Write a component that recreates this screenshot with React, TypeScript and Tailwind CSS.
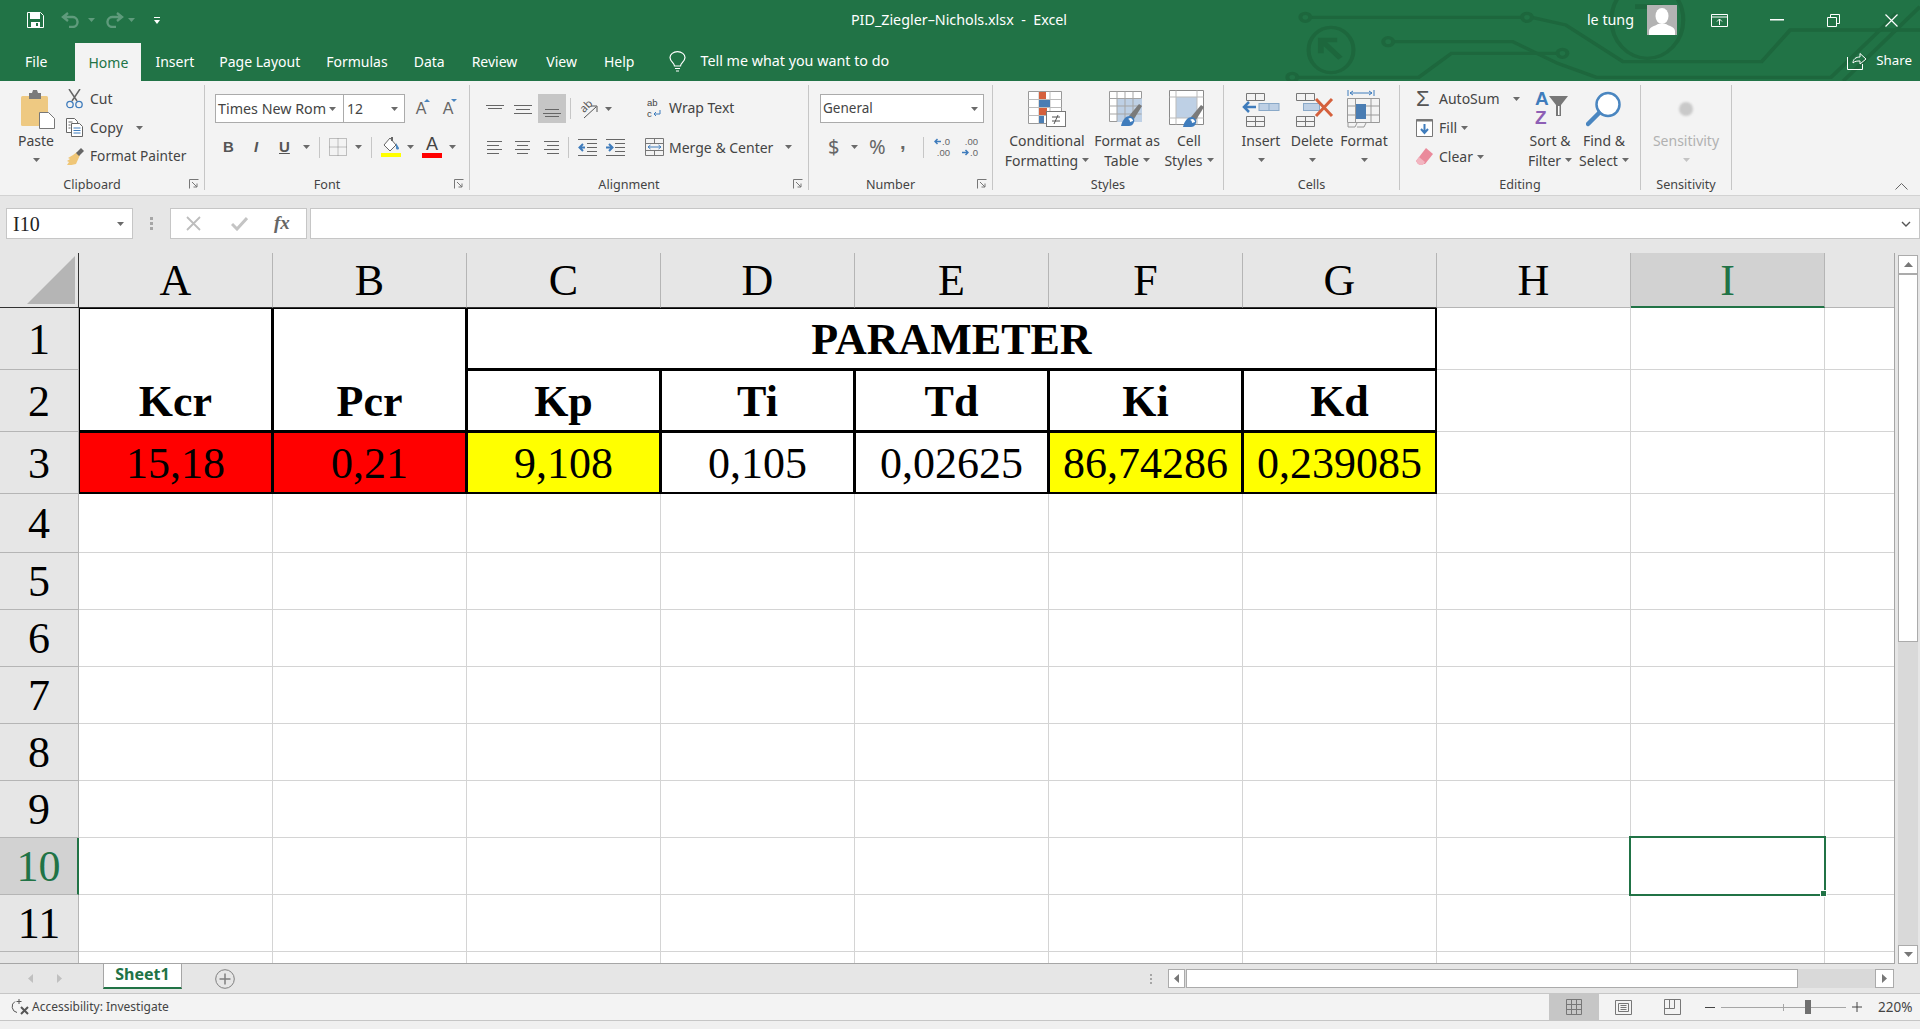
import type { ReactNode } from 'react'

const UI = "font-['Noto_Sans',sans-serif]"
const SERIF = "font-['Liberation_Serif',serif]"
const SANS = "font-['Liberation_Sans',sans-serif]"

function Caret({ className = '', color = '#6a6a6a' }: { className?: string; color?: string }) {
  return (
    <svg width="7" height="4" viewBox="0 0 7 4" className={`shrink-0 ${className}`}>
      <path d="M0 0h7L3.5 4z" fill={color} />
    </svg>
  )
}

function Circuit() {
  return (
    <svg
      viewBox="0 0 1568 243"
      preserveAspectRatio="none"
      className="absolute right-0 top-0 h-[81px] w-[640px]"
      fill="none"
      stroke="#1d673d"
      strokeWidth="10"
    >
      <path d="M74 52H593M617 52 700 75 840 185H1180L1250 90H1568" />
      <path d="M277 125H570L680 190 775 232H1350L1470 90 1510 40" />
      <path d="M42 232H340L420 160H680" />
      <path d="M1380 243 1568 20" />
      <ellipse cx="62" cy="52" rx="12" ry="12" />
      <ellipse cx="605" cy="52" rx="12" ry="12" />
      <ellipse cx="265" cy="125" rx="12" ry="12" />
      <ellipse cx="692" cy="160" rx="12" ry="12" />
      <ellipse cx="30" cy="232" rx="12" ry="12" />
      <ellipse cx="125" cy="150" rx="55" ry="68" />
      <path d="M148 175 105 125M100 160V120H140" strokeWidth="14" />
      <ellipse cx="900" cy="60" rx="88" ry="115" />
      <path d="M870 20H930V75" strokeWidth="14" />
    </svg>
  )
}

function TitleBar() {
  return (
    <div className="relative h-[43px] text-white">
      <div className="absolute left-0 top-0 flex h-[40px] items-center pl-[27px]">
        <svg width="17" height="16" viewBox="0 0 17 16">
          <path d="M.5.5h13l3 3v12H.5z" fill="none" stroke="#fff" />
          <rect x="3" y="1" width="10" height="6" fill="#fff" />
          <rect x="4" y="10" width="9" height="6" fill="#fff" />
          <rect x="9" y="11" width="2" height="3" fill="#217346" />
        </svg>
        <svg width="18" height="16" viewBox="0 0 18 16" className="ml-[17px]" fill="none" stroke="#5f9b7c" strokeWidth="2.4">
          <path d="M7 1 2 5l5 4M2 5h9a5 5 0 0 1 1 10H8" />
        </svg>
        <Caret className="ml-[9px]" color="#5f9b7c" />
        <svg width="18" height="16" viewBox="0 0 18 16" className="ml-[11px]" fill="none" stroke="#5f9b7c" strokeWidth="2.4">
          <path d="m11 1 5 4-5 4M16 5H7a5 5 0 0 0-1 10h4" />
        </svg>
        <Caret className="ml-[4px]" color="#5f9b7c" />
        <svg width="6" height="8" viewBox="0 0 6 8" className="ml-[19px] mt-[2px]">
          <path d="M0 0h6v1H0zM0 3h6L3 7z" fill="#fff" />
        </svg>
      </div>
      <div className={`${UI} absolute inset-x-0 top-0 flex h-[40px] items-center justify-center pr-[2px] text-[14.3px]`}>
        PID_Ziegler–Nichols.xlsx&nbsp; -&nbsp; Excel
      </div>
      <div className="absolute right-0 top-0 flex h-[40px] items-center">
        <span className={`${UI} mb-px text-[14.3px]`}>le tung</span>
        <div className="ml-[13px] flex h-[30px] w-[30px] items-end justify-center overflow-hidden bg-[#b3b3b3]">
          <svg width="26" height="27" viewBox="0 0 26 27" fill="#fff">
            <ellipse cx="13" cy="8" rx="6.5" ry="8" />
            <path d="M0 27v-4c0-4 6-5 9-7h8c3 2 9 3 9 7v4z" />
          </svg>
        </div>
        <svg width="17" height="13" viewBox="0 0 17 13" className="ml-[34px]" fill="none" stroke="#fff">
          <path d="M.5.500h16v12H.5zM.5 3h16M8.500 11V5M6 7.500l2.500-2.500L11 7.500" />
        </svg>
        <svg width="14" height="2" viewBox="0 0 14 2" className="ml-[42px]">
          <rect width="14" height="1.500" fill="#fff" />
        </svg>
        <svg width="13" height="13" viewBox="0 0 13 13" className="ml-[43px]" fill="none" stroke="#fff">
          <path d="M.5 3.500h9v9h-9zM3.500 3.500v-3h9v9h-3" />
        </svg>
        <svg width="13" height="13" viewBox="0 0 13 13" className="ml-[45px] mr-[22px]" fill="none" stroke="#fff" strokeWidth="1.200">
          <path d="m.5.500 12 12M12.500.5l-12 12" />
        </svg>
      </div>
    </div>
  )
}

function TabStrip() {
  return (
    <div className="relative flex h-[38px] items-center pb-[2px] text-white">
      <div className={`${UI} flex h-full items-center pl-[25px] text-[14px]`}>
        <span>File</span>
        <span className="ml-[28px] -mb-[2px] flex h-[38px] w-[66px] items-center justify-center bg-[#f3f3f3] text-[#217346]">Home</span>
        <span className="ml-[14px]">Insert</span>
        <span className="ml-[25px]">Page Layout</span>
        <span className="ml-[26px]">Formulas</span>
        <span className="ml-[26px]">Data</span>
        <span className="ml-[27px]">Review</span>
        <span className="ml-[29px]">View</span>
        <span className="ml-[27px]">Help</span>
        <svg width="17" height="21" viewBox="0 0 17 21" className="ml-[35px]" fill="none" stroke="#fff" strokeWidth="1.200">
          <path d="M5.500 15c0-3-4.500-4.500-4.500-8.500a7.500 5.800 0 0 1 15 0c0 4-4.500 5.500-4.500 8.500zM6 17.500h5M7 20h3" />
        </svg>
        <span className="ml-[14px] text-[14.300px]">Tell me what you want to do</span>
      </div>
      <div className={`${UI} absolute right-[8px] top-[8px] flex items-center text-[13.3px]`}>
        <svg width="20" height="18" viewBox="0 0 20 18" fill="none" stroke="#fff">
          <path d="M.5 5v12.500h15V12M6 11c0-4 3-6 7-6V1.500l6 5.500-6 5V9c-3 0-5 0-7 2z" />
        </svg>
        <span className="ml-[9px]">Share</span>
      </div>
    </div>
  )
}

function Launcher() {
  return (
    <svg width="10" height="10" viewBox="0 0 10 10" fill="none" stroke="#777" className="absolute right-[5px] top-[2px]">
      <path d="M.5 9.500v-9h9M3 3l5 5M8 4.500V8H4.500" />
    </svg>
  )
}

function Group({ label, w, launcher, children }: { label: string; w: string; launcher?: boolean; children: ReactNode }) {
  return (
    <div className={`${w} mt-[4px] flex h-[105px] shrink-0 flex-col border-r border-[#c6c6c6]`}>
      <div className="h-[92px] shrink-0">{children}</div>
      <div className={`relative flex h-[16px] shrink-0 items-center justify-center text-[12.6px] ${launcher ? 'pr-[20px]' : ''}`}>
        {label}
        {launcher && <Launcher />}
      </div>
    </div>
  )
}

function BigButton({ icon, lines, w, caret, disabled }: { icon: ReactNode; lines: string[]; w: string; caret?: boolean; disabled?: boolean }) {
  return (
    <div className={`${w} flex h-[87px] shrink-0 flex-col items-center ${disabled ? 'text-[#b1b1b1]' : ''}`}>
      <div className="flex h-[45px] items-center justify-center pt-[3px]">{icon}</div>
      <div className="flex h-[20px] items-center whitespace-nowrap">{lines[0]}</div>
      <div className="flex h-[20px] items-center gap-[4px] whitespace-nowrap">
        {lines[1]}
        {caret && <Caret color={disabled ? '#c4c4c4' : '#6a6a6a'} />}
      </div>
    </div>
  )
}

function Lines({ rows }: { rows: [number, number, number][] }) {
  return (
    <svg width="19" height="18" viewBox="0 0 19 18" stroke="#666">
      {rows.map(([y, a, b]) => (
        <path key={y} d={`M${a} ${y + 0.5}H${b}`} />
      ))}
    </svg>
  )
}

function Clipboard() {
  return (
    <Group label="Clipboard" w="w-[205px]" launcher>
      <div className="flex">
        <BigButton
          w="ml-[14px] w-[44px]"
          lines={['Paste', '']}
          caret
          icon={
            <svg width="34" height="40" viewBox="0 0 34 40" className="ml-[4px]">
              <rect y="7" width="27" height="30" rx="1.500" fill="#eec982" />
              <path d="M8 4h3l1-3h4l1 3h3v6H8z" fill="#7a7a7a" />
              <path d="M18.500 23.500h9l6 6v10h-15z" fill="#fff" stroke="#777" />
            </svg>
          }
        />
        <div className="-mt-px ml-[8px] flex flex-col">
          <div className="flex h-[29px] items-center">
            <svg width="17" height="20" viewBox="0 0 17 20" fill="none">
              <path d="m3 0 8 12M14 0 6 12" stroke="#666" strokeWidth="1.500" />
              <circle cx="4" cy="15.500" r="3.200" stroke="#3f7cbc" strokeWidth="1.300" />
              <circle cx="13" cy="15.500" r="3.200" stroke="#3f7cbc" strokeWidth="1.300" />
            </svg>
            <span className="ml-[7px]">Cut</span>
          </div>
          <div className="flex h-[29px] items-center">
            <svg width="17" height="19" viewBox="0 0 17 19" fill="none" stroke="#666">
              <path d="M.5.500h8l3 3v11H.5z" fill="#fff" />
              <path d="M5.500 5.500h8l3 3v10h-11z" fill="#fff" />
              <path d="M7.500 10h7M7.500 12.500h7M7.500 15h7" stroke="#3f7cbc" />
              <path d="M2.500 4h4M2.500 7h2M2.500 10h2" />
            </svg>
            <span className="ml-[7px]">Copy</span>
            <Caret className="ml-[13px]" />
          </div>
          <div className="flex h-[29px] items-center">
            <svg width="18" height="18" viewBox="0 0 18 18">
              <path d="m11 4 3 3-4 9c-3 1-6 1-9 1l2-3-2-1 3-2-2-1 5-3z" fill="#efc677" />
              <path d="m10 5 5-5 3 3-5 5z" fill="#666" />
            </svg>
            <span className="ml-[6px] text-[13.700px]">Format Painter</span>
          </div>
        </div>
      </div>
    </Group>
  )
}

function FontGroup() {
  return (
    <Group label="Font" w="w-[265px]" launcher>
      <div className="flex pl-[10px] pt-[9px]">
        <div className="flex h-[29px] w-[128px] items-center border border-r-0 border-[#ababab] bg-white pl-[2px]">
          <span className="whitespace-nowrap text-[14.300px]">Times New Rom</span>
          <Caret className="ml-[3px]" />
        </div>
        <div className="flex h-[29px] w-[62px] items-center justify-between border border-[#ababab] bg-white pl-[3px] pr-[6px]">
          12
          <Caret />
        </div>
        <div className={`${SANS} relative ml-[9px] flex h-[29px] w-[14px] items-center justify-center text-[16px] text-[#666]`}>
          A
          <svg width="6" height="3" viewBox="0 0 6 3" className="absolute -right-[2px] top-[5px]"><path d="M0 3h6L3 0z" fill="#4a86c0" /></svg>
        </div>
        <div className={`${SANS} relative ml-[13px] flex h-[29px] w-[14px] items-center justify-center text-[16px] text-[#666]`}>
          A
          <svg width="6" height="3" viewBox="0 0 6 3" className="absolute -right-[2px] top-[5px]"><path d="M0 0h6L3 3z" fill="#4a86c0" /></svg>
        </div>
      </div>
      <div className={`${SANS} mt-[9px] flex h-[30px] items-center pl-[18px] text-[15px] font-bold text-[#555]`}>
        <span className="w-[31px]">B</span>
        <span className="w-[25px] italic">I</span>
        <span className="w-[24px] underline">U</span>
        <Caret />
        <div className="ml-[9px] h-[21px] w-px bg-[#c6c6c6]" />
        <svg width="18" height="18" viewBox="0 0 18 18" className="ml-[9px]" fill="none" stroke="#888" strokeDasharray="1 1">
          <path d="M.5.500h17v17H.5zM9 .5v17M.5 9h17" />
        </svg>
        <Caret className="ml-[8px]" />
        <div className="ml-[9px] h-[21px] w-px bg-[#c6c6c6]" />
        <svg width="20" height="20" viewBox="0 0 20 20" className="ml-[9px]">
          <path d="M9 1 3 8l6 6 6-6z" fill="#fff" stroke="#666" />
          <path d="M10 0h2v4h-2z" fill="#666" />
          <path d="m15 6 3 5c0 2-3 2-3 0z" fill="#4a86c0" />
          <rect y="16" width="20" height="4" fill="#ffff00" />
        </svg>
        <Caret className="ml-[6px]" />
        <div className="ml-[8px] flex w-[20px] flex-col items-center">
          <span className="h-[17px] text-[18px] font-normal leading-[17px] text-[#444]">A</span>
          <span className="h-[5px] w-[20px] bg-[#ff0000]" />
        </div>
        <Caret className="ml-[7px]" />
      </div>
    </Group>
  )
}

function Alignment() {
  const top: [number, number, number][] = [[5, 0, 18], [8, 2, 16]]
  const mid: [number, number, number][] = [[5, 0, 18], [9, 2, 16], [13, 0, 18]]
  const bot: [number, number, number][] = [[9, 2, 16], [13, 0, 18], [16, 2, 16]]
  return (
    <Group label="Alignment" w="w-[339px]" launcher>
      <div className="flex">
        <div className="ml-[16px] w-[159px] shrink-0 pt-[9px]">
          <div className="flex h-[29px] items-center">
            <Lines rows={top} />
            <div className="ml-[9px]"><Lines rows={mid} /></div>
            <div className="ml-[5px] flex h-[29px] w-[28px] items-center justify-center bg-[#c6c6c6]"><Lines rows={bot} /></div>
            <div className="ml-[4px] h-[21px] w-px bg-[#c6c6c6]" />
            <div className="relative ml-[8px] h-[20px] w-[20px] text-[#555]">
              <span className="absolute left-0 top-[1px] -rotate-45 text-[11px] leading-none">ab</span>
              <svg width="20" height="20" viewBox="0 0 20 20" className="absolute left-0 top-0">
                <path d="m5 19 12-11M12 7h6v6" fill="none" stroke="#555" />
              </svg>
            </div>
            <Caret className="ml-[6px]" />
          </div>
          <div className="mt-[9px] flex h-[30px] items-center">
            <Lines rows={[[3, 1, 16], [7, 1, 13], [11, 1, 16], [15, 1, 13]]} />
            <div className="ml-[9px]"><Lines rows={[[3, 1, 16], [7, 3, 14], [11, 1, 16], [15, 3, 14]]} /></div>
            <div className="ml-[10px]"><Lines rows={[[3, 1, 16], [7, 4, 16], [11, 1, 16], [15, 4, 16]]} /></div>
            <div className="ml-[6px] h-[21px] w-px bg-[#c6c6c6]" />
            <svg width="19" height="19" viewBox="0 0 19 19" className="ml-[9px]" stroke="#666">
              <path d="M0 1.500h19M9 5.500h10M9 9.500h10M9 13.500h10M0 17.500h19" />
              <path d="M7 9.500H2M5 6 1.500 9.500 5 13" fill="none" stroke="#3f7cbc" strokeWidth="2" />
            </svg>
            <svg width="19" height="19" viewBox="0 0 19 19" className="ml-[9px]" stroke="#666">
              <path d="M0 1.500h19M9 5.500h10M9 9.500h10M9 13.500h10M0 17.500h19" />
              <path d="M0 9.500h6M3 6l3.500 3.500L3 13" fill="none" stroke="#3f7cbc" strokeWidth="2" />
            </svg>
          </div>
        </div>
        <div className="w-[160px] pt-[8px]">
          <div className="ml-[2px] flex h-[29px] items-center">
            <div className={`${SANS} flex w-[17px] flex-col text-[9.500px] leading-[11px]`}>
              <span>ab</span>
              <span className="flex items-center">
                c
                <svg width="8" height="7" viewBox="0 0 8 7" className="ml-[1px]" fill="none" stroke="#3f7cbc">
                  <path d="M7 0v4H1M3 2 1 4l2 2" />
                </svg>
              </span>
            </div>
            <span className="ml-[5px]">Wrap Text</span>
          </div>
          <div className="mt-[10px] flex h-[30px] items-center">
            <svg width="19" height="18" viewBox="0 0 19 18" fill="none" stroke="#777">
              <path d="M.5.500h18v17H.5zM.5 5.500h18M.5 12.500h18M9.500.5v5M9.500 12.500v5" />
              <path d="M3 9h13M5.500 7 3 9l2.500 2M13.500 7 16 9l-2.500 2" stroke="#3f7cbc" />
            </svg>
            <span className="ml-[5px]">Merge &amp; Center</span>
            <Caret className="ml-[12px]" />
          </div>
        </div>
      </div>
    </Group>
  )
}

function NumberGroup() {
  return (
    <Group label="Number" w="w-[184px]" launcher>
      <div className="ml-[11px] mt-[9px] flex h-[29px] w-[164px] items-center justify-between border border-[#ababab] bg-white pl-[2px] pr-[5px] text-[13.500px]">
        General
        <Caret />
      </div>
      <div className="mt-[9px] flex h-[30px] items-center pl-[19px] text-[#666]">
        <span className="w-[11px] text-[20px]">$</span>
        <Caret className="ml-[12px]" />
        <span className="ml-[11px] w-[16px] text-[20px] leading-none">%</span>
        <span className={`${SANS} -mt-[11px] ml-[15px] w-[6px] text-[20px] font-bold leading-[14px]`}>,</span>
        <div className="ml-[17px] h-[21px] w-px bg-[#c6c6c6]" />
        <div className={`${SANS} ml-[8px] flex w-[18px] flex-col text-[9.500px] leading-[11px]`}>
          <span className="flex items-center justify-end">
            <svg width="7" height="7" viewBox="0 0 7 7" className="mr-[1px]" fill="none" stroke="#3f7cbc" strokeWidth="1.500">
              <path d="M7 3.500H1M3.500 1 1 3.500 3.500 6" />
            </svg>
            .0
          </span>
          <span className="text-right">.00</span>
        </div>
        <div className={`${SANS} ml-[10px] flex w-[18px] flex-col text-[9.500px] leading-[11px]`}>
          <span className="text-right">.00</span>
          <span className="flex items-center justify-end">
            <svg width="7" height="7" viewBox="0 0 7 7" className="mr-[1px]" fill="none" stroke="#3f7cbc" strokeWidth="1.500">
              <path d="M0 3.500h6M3.500 1 6 3.500 3.500 6" />
            </svg>
            .0
          </span>
        </div>
      </div>
    </Group>
  )
}

function Brush({ x, y }: { x: number; y: number }) {
  return (
    <g transform={`translate(${x} ${y})`}>
      <path d="m8 14 10-12 3 2-8 13z" fill="#7a7a7a" />
      <path d="M0 24c1-5 4-10 9-10 4 1 5 4 4 6-1 3-3 4-5 4z" fill="#3f7cbc" />
      <path d="M9 16c2 0 3 2 3 3l-3 1c0-2-1-3-2-3z" fill="#fff" />
    </g>
  )
}

function Styles() {
  return (
    <Group label="Styles" w="w-[231px]">
      <div className="flex pl-[11px]">
        <BigButton
          w="w-[86px]"
          lines={['Conditional', 'Formatting']}
          caret
          icon={
            <svg width="38" height="36" viewBox="0 0 38 36">
              <path d="M.5.500h33v32H.5z" fill="#fff" stroke="#999" />
              <path d="M11 .5v32M22 .5v32M.5 8.500h33M.5 16.500h33M.5 24.500h33" stroke="#bbb" />
              <rect x="11" y="1" width="7" height="7" fill="#d5603c" />
              <rect x="11" y="9" width="11" height="7" fill="#4a7db3" />
              <rect x="11" y="17" width="8" height="7" fill="#d5603c" />
              <rect x="11" y="25" width="5" height="7" fill="#4a7db3" />
              <rect x="18.500" y="20.500" width="19" height="15" fill="#fff" stroke="#777" />
              <path d="M24 26h8M24 30h8M30 24l-4 9" stroke="#555" fill="none" />
            </svg>
          }
        />
        <BigButton
          w="w-[74px]"
          lines={['Format as', 'Table']}
          caret
          icon={
            <svg width="40" height="36" viewBox="0 0 40 36" className="ml-[4px]">
              <path d="M.5.500h32v30H.5z" fill="#fff" stroke="#999" />
              <rect x="8" y="7" width="25" height="24" fill="#bed0e5" />
              <path d="M8 .5v30M16 .5v30M24 .5v30M.5 7.500h32M.5 15h32M.5 23h32" stroke="#a5a5a5" />
              <Brush x={12} y={11} />
            </svg>
          }
        />
        <BigButton
          w="w-[50px]"
          lines={['Cell', 'Styles']}
          caret
          icon={
            <svg width="40" height="38" viewBox="0 0 40 38">
              <path d="M.5.500h34v34H.5z" fill="#fff" stroke="#8a8a8a" />
              <rect x="7" y="7" width="21" height="21" fill="#bed0e5" />
              <path d="M7 .5v34M28 .5v34M.5 7h34M.5 28h34" stroke="#bbb" />
              <Brush x={14} y={13} />
            </svg>
          }
        />
      </div>
    </Group>
  )
}

function Cells() {
  return (
    <Group label="Cells" w="w-[176px]">
      <div className="flex pl-[12px]">
        <BigButton
          w="w-[50px]"
          lines={['Insert', '']}
          caret
          icon={
            <svg width="38" height="36" viewBox="0 0 38 36" fill="none">
              <path d="M4.500 2.500h18v7h-18zM13.500 2.500v7M4.500 25.500h18v10h-18zM13.500 25.500v10M4.500 30.500h18" stroke="#777" />
              <rect x="17" y="12.500" width="20" height="7" fill="#bed0e5" stroke="#8aa9c8" />
              <path d="M27 12.500v7" stroke="#8aa9c8" />
              <path d="M14 16H2M7 11l-5 5 5 5" stroke="#3f7cbc" strokeWidth="2.500" />
            </svg>
          }
        />
        <BigButton
          w="w-[52px]"
          lines={['Delete', '']}
          caret
          icon={
            <svg width="38" height="36" viewBox="0 0 38 36" fill="none" className="ml-[6px]">
              <path d="M.5 2.500h18v7H.5zM9.500 2.500v7M.5 25.500h18v10H.5zM9.500 25.500v10M.5 30.500h18" stroke="#777" />
              <rect x="7.500" y="12.500" width="16" height="7" fill="#bed0e5" stroke="#8aa9c8" />
              <path d="m20 8 16 17M36 8 20 25" stroke="#d5603c" strokeWidth="3" />
            </svg>
          }
        />
        <BigButton
          w="w-[52px]"
          lines={['Format', '']}
          caret
          icon={
            <svg width="34" height="38" viewBox="0 0 34 38" fill="none">
              <path d="M1 0v6M27 0v6M3 3h22M6 1 3 3l3 2M22 1l3 2-3 2" stroke="#3f7cbc" />
              <path d="M.5 8.500h32v24H.5zM8.500 8.500v24M24 8.500v24M.5 16h32M.5 25h32" stroke="#999" />
              <rect x="9" y="14" width="10" height="15" fill="#4a7db3" />
              <path d="M1 33v4h7l2-4M10 37h7l2-4" stroke="#999" />
            </svg>
          }
        />
      </div>
    </Group>
  )
}

function Editing() {
  return (
    <Group label="Editing" w="w-[241px]">
      <div className="flex pl-[16px]">
        <div className="-mt-px flex w-[110px] flex-col">
          <div className="flex h-[29px] items-center">
            <span className={`${SANS} w-[16px] text-[22px] leading-none text-[#555]`}>Σ</span>
            <span className="ml-[7px]">AutoSum</span>
            <Caret className="ml-[13px]" />
          </div>
          <div className="flex h-[29px] items-center">
            <svg width="17" height="18" viewBox="0 0 17 18" fill="none">
              <path d="M.5.500h16v17H.5z" fill="#fff" stroke="#777" />
              <path d="M.5 1.500h16" stroke="#777" strokeWidth="2" />
              <path d="M8.500 5v9M5 10l3.500 4 3.500-4" stroke="#3f7cbc" strokeWidth="2" />
            </svg>
            <span className="ml-[6px]">Fill</span>
            <Caret className="ml-[4px]" />
          </div>
          <div className="flex h-[29px] items-center">
            <svg width="17" height="17" viewBox="0 0 17 17">
              <path d="m10 0 7 6-8 10-7 0-2-3z" fill="#ea8a9b" />
              <path d="M0 13 3 9l6 5-2 3H3z" fill="#f2b5c0" />
            </svg>
            <span className="ml-[6px]">Clear</span>
            <Caret className="ml-[4px]" />
          </div>
        </div>
        <BigButton
          w="w-[48px]"
          lines={['Sort &', 'Filter']}
          caret
          icon={
            <div className={`${SANS} relative h-[40px] w-[36px] text-[19px] font-bold leading-[19px]`}>
              <span className="absolute left-[3px] top-0 text-[#3f7cbc]">A</span>
              <span className="absolute left-[3px] top-[19px] text-[#8e5fb5]">Z</span>
              <svg width="19" height="22" viewBox="0 0 19 22" className="absolute right-0 top-[7px]">
                <path d="M0 0h19l-7 9v11H7V9z" fill="#777" />
                <path d="M9 10h1.500v9H9z" fill="#fff" />
              </svg>
            </div>
          }
        />
        <BigButton
          w="ml-[6px] w-[48px]"
          lines={['Find &', 'Select']}
          caret
          icon={
            <svg width="36" height="36" viewBox="0 0 36 36" fill="none">
              <circle cx="22" cy="13.500" r="11.500" stroke="#4a86c0" strokeWidth="2.500" fill="#fff" />
              <path d="M13 22 2 33" stroke="#4a86c0" strokeWidth="4.500" strokeLinecap="round" />
            </svg>
          }
        />
      </div>
    </Group>
  )
}

function Ribbon() {
  return (
    <div className={`${UI} relative flex h-[115px] border-b border-[#d2d2d2] bg-[#f3f3f3] text-[14px] text-[#444]`}>
      <Clipboard />
      <FontGroup />
      <Alignment />
      <NumberGroup />
      <Styles />
      <Cells />
      <Editing />
      <Group label="Sensitivity" w="w-[91px]">
        <BigButton
          w="w-[90px]"
          disabled
          lines={['Sensitivity', '']}
          caret
          icon={<div className="h-[14px] w-[14px] rounded-full bg-[#c9c9c9] blur-[1px]" />}
        />
      </Group>
      <svg width="13" height="7" viewBox="0 0 13 7" className="absolute bottom-[5px] right-[12px]" fill="none" stroke="#666">
        <path d="m.5 6.500 6-6 6 6" />
      </svg>
    </div>
  )
}

function FormulaBar() {
  return (
    <div className="flex h-[57px] bg-[#e6e6e6] pl-[6px] pt-[12px]">
      <div className={`${SERIF} flex h-[31px] w-[127px] items-center justify-between border border-[#c6c6c6] bg-white pl-[6px] pr-[8px] text-[20px] text-[#222]`}>
        I10
        <Caret />
      </div>
      <div className="mx-[17px] flex h-[31px] flex-col items-center justify-center gap-[2px]">
        <span className="h-[3px] w-[3px] bg-[#a6a6a6]" />
        <span className="h-[3px] w-[3px] bg-[#a6a6a6]" />
        <span className="h-[3px] w-[3px] bg-[#a6a6a6]" />
      </div>
      <div className="flex h-[31px] w-[137px] items-center border border-[#c6c6c6] bg-white pl-[15px]">
        <svg width="15" height="15" viewBox="0 0 15 15" fill="none" stroke="#bdbdbd" strokeWidth="1.800">
          <path d="m1 1 13 13M14 1 1 14" />
        </svg>
        <svg width="17" height="14" viewBox="0 0 17 14" className="ml-[30px]" fill="none" stroke="#c4c4c4" strokeWidth="3">
          <path d="m1 7 5 5L16 1" />
        </svg>
        <span className={`${SERIF} ml-[26px] text-[19px] font-bold italic text-[#666]`}>fx</span>
      </div>
      <div className="ml-[3px] flex h-[31px] flex-1 items-center justify-end border border-[#c6c6c6] bg-white pr-[8px]">
        <svg width="10" height="6" viewBox="0 0 10 6" fill="none" stroke="#555" strokeWidth="1.400">
          <path d="m1 1 4 4 4-4" />
        </svg>
      </div>
    </div>
  )
}

const COLS = ['A', 'B', 'C', 'D', 'E', 'F', 'G', 'H', 'I', '']
const TABLE = 'border-t border-r-2 border-b-2 border-l border-black'

function Sheet() {
  const rows = [4, 5, 6, 7, 8, 9, 10, 11, 12]
  const cell = 'border-r border-b border-[#d4d4d4]'
  const head = `${SERIF} flex items-center justify-center overflow-hidden pt-[2px] text-[44px] leading-none`
  const rowHead = `${head} border-r border-b border-[#b5b5b5] bg-[#e6e6e6] text-black`
  const data: [string, string][] = [
    ['15,18', 'bg-[#ff0000]'],
    ['0,21', 'bg-[#ff0000]'],
    ['9,108', 'bg-[#ffff00]'],
    ['0,105', 'bg-white'],
    ['0,02625', 'bg-white'],
    ['86,74286', 'bg-[#ffff00]'],
    ['0,239085', 'bg-[#ffff00]'],
  ]
  return (
    <div className="relative h-[711px] flex-1 overflow-hidden border-b border-[#a6a6a6]">
      <div className={`${SERIF} grid grid-cols-[79px_repeat(9,194px)_70px] grid-rows-[55px_62px_62px_62px_59px_repeat(8,57px)] bg-white text-[44px] leading-none text-black`}>
        {/* header row */}
        <div className="flex items-end justify-end border-r border-b border-[#333] bg-[#e6e6e6] pb-[3px] pr-[3px]">
          <svg width="48" height="48" viewBox="0 0 48 48"><path d="M48 0v48H0z" fill="#b5b5b5" /></svg>
        </div>
        {COLS.map((c, i) => (
          <div
            key={i}
            className={`${head} border-r border-[#b5b5b5] ${c === 'I' ? 'border-b-2 border-b-[#217346] bg-[#d2d2d2] text-[#217346]' : i < 7 ? 'border-b border-b-[#333] bg-[#e6e6e6]' : 'border-b border-b-[#b5b5b5] bg-[#e6e6e6]'}`}
          >
            {c}
          </div>
        ))}

        {/* rows 1-3 hold the bordered table */}
        <div className={rowHead}>1</div>
        <div className={`${TABLE} row-span-2 flex items-end justify-center bg-white font-bold leading-[56px]`}>Kcr</div>
        <div className={`${TABLE} row-span-2 flex items-end justify-center bg-white font-bold leading-[56px]`}>Pcr</div>
        <div className={`${TABLE} col-span-5 flex items-center justify-center bg-white pt-[2px] font-bold`}>PARAMETER</div>
        <div className={cell} />
        <div className={cell} />
        <div className={cell} />

        <div className={rowHead}>2</div>
        {['Kp', 'Ti', 'Td', 'Ki', 'Kd'].map(t => (
          <div key={t} className={`${TABLE} flex items-center justify-center bg-white pt-[3px] font-bold`}>{t}</div>
        ))}
        <div className={cell} />
        <div className={cell} />
        <div className={cell} />

        <div className={rowHead}>3</div>
        {data.map(([t, bg], i) => (
          <div key={i} className={`${TABLE} ${bg} flex items-center justify-center pt-[2px]`}>{t}</div>
        ))}
        <div className={cell} />
        <div className={cell} />
        <div className={cell} />

        {rows.map(r => (
          <div key={r} className="contents">
            <div className={r === 10 ? `${head} border-r-2 border-b border-r-[#217346] border-b-[#b5b5b5] bg-[#d2d2d2] text-[#217346]` : rowHead}>{r < 12 ? r : ''}</div>
            {COLS.map((_, i) => (
              <div key={i} className={cell} />
            ))}
          </div>
        ))}
      </div>
      {/* selected cell I10 */}
      <div className="absolute left-[1629px] top-[583px] h-[60px] w-[197px] border-2 border-[#217346]">
        <span className="absolute -bottom-[3px] -right-[3px] h-[7px] w-[7px] border border-white bg-[#217346]" />
      </div>
    </div>
  )
}

function VScroll() {
  return (
    <div className="flex h-[711px] w-[26px] shrink-0 flex-col border-l border-[#a6a6a6] bg-[#e6e6e6] pl-[3px] pr-[2px] pt-[2px]">
      <div className="flex h-[19px] items-center justify-center border border-[#ababab] bg-white">
        <svg width="9" height="5" viewBox="0 0 9 5"><path d="M0 5h9L4.500 0z" fill="#777" /></svg>
      </div>
      <div className="flex-1 bg-[#d9d9d9]">
        <div className="h-[368px] border border-[#ababab] bg-white" />
      </div>
      <div className="flex h-[19px] items-center justify-center border border-[#ababab] bg-white">
        <svg width="9" height="5" viewBox="0 0 9 5"><path d="M0 0h9L4.500 5z" fill="#777" /></svg>
      </div>
    </div>
  )
}

function SheetTabs() {
  return (
    <div className={`${UI} flex h-[29px] bg-[#e6e6e6]`}>
      <div className="flex h-[29px] w-[103px] items-center pl-[28px]">
        <svg width="5" height="9" viewBox="0 0 5 9"><path d="M5 0v9L0 4.500z" fill="#c0c0c0" /></svg>
        <svg width="5" height="9" viewBox="0 0 5 9" className="ml-[24px]"><path d="M0 0v9l5-4.500z" fill="#c0c0c0" /></svg>
      </div>
      <div className="flex h-[25px] w-[79px] items-center justify-center border-x border-b-2 border-x-[#a6a6a6] border-b-[#217346] bg-white pb-[3px] text-[16px] font-bold text-[#217346]">
        Sheet1
      </div>
      <svg width="20" height="20" viewBox="0 0 20 20" className="ml-[33px] mt-[5px]" fill="none" stroke="#7f7f7f">
        <circle cx="10" cy="10" r="9.300" />
        <path d="M10 4.500v11M4.500 10h11" strokeWidth="1.500" />
      </svg>
      <div className="ml-[915px] mt-[10px] flex h-[10px] flex-col justify-between">
        <span className="h-[2px] w-[2px] bg-[#a6a6a6]" />
        <span className="h-[2px] w-[2px] bg-[#a6a6a6]" />
        <span className="h-[2px] w-[2px] bg-[#a6a6a6]" />
      </div>
      <div className="ml-[16px] mt-[5px] flex h-[19px] w-[726px] bg-[#d9d9d9]">
        <div className="flex w-[17px] items-center justify-center border border-[#ababab] bg-white">
          <svg width="5" height="9" viewBox="0 0 5 9"><path d="M5 0v9L0 4.500z" fill="#777" /></svg>
        </div>
        <div className="ml-px w-[612px] border border-[#ababab] bg-white" />
        <div className="ml-auto flex w-[19px] items-center justify-center border border-[#ababab] bg-white">
          <svg width="5" height="9" viewBox="0 0 5 9"><path d="M0 0v9l5-4.500z" fill="#777" /></svg>
        </div>
      </div>
    </div>
  )
}

function StatusBar() {
  return (
    <div className={`${UI} flex h-[36px] flex-col bg-[#f0f0f0]`}>
      <div className="flex h-[28px] items-center border-y border-[#c6c6c6] bg-[#f3f3f3] text-[12px] text-[#444]">
        <svg width="20" height="18" viewBox="0 0 20 18" className="ml-[10px]" fill="none" stroke="#555">
          <path d="M5 3.500a6 6 0 0 0 2 11M9 1v5M6.500 3.500h5" />
          <path d="m11 9 7 7M18 9l-7 7" strokeWidth="2" />
        </svg>
        <span className="ml-[2px]">Accessibility: Investigate</span>
        <div className="ml-auto flex h-full w-[50px] items-center justify-center bg-[#c6c6c6]">
          <svg width="16" height="16" viewBox="0 0 16 16" fill="none" stroke="#777">
            <path d="M.5.500h15v15H.5zM5.500.5v15M10.500.5v15M.5 5.500h15M.5 10.500h15" />
          </svg>
        </div>
        <svg width="17" height="15" viewBox="0 0 17 15" className="ml-[16px]" fill="none" stroke="#777">
          <path d="M.5.500h16v14H.5zM3.500 3.500h10v8h-10zM5.500 5.500h6M5.500 7.500h6M5.500 9.500h6" />
        </svg>
        <svg width="17" height="16" viewBox="0 0 17 16" className="ml-[32px]" fill="none" stroke="#777">
          <path d="M.5.500h16v15H.5zM.5 9.500h10V.5M5.500.5v9" />
        </svg>
        <svg width="10" height="1" viewBox="0 0 10 1" className="ml-[24px]"><rect width="10" height="1" fill="#444" /></svg>
        <div className="relative ml-[6px] h-px w-[125px] bg-[#a6a6a6]">
          <span className="absolute left-[62px] -top-[3px] h-[7px] w-px bg-[#a6a6a6]" />
          <span className="absolute left-[84px] -top-[7px] h-[14px] w-[6px] bg-[#6f6f6f]" />
        </div>
        <svg width="10" height="10" viewBox="0 0 10 10" className="ml-[6px]"><path d="M0 5h10M5 0v10" stroke="#444" /></svg>
        <span className="ml-[16px] mr-[9px] w-[33px] whitespace-nowrap text-[13.500px]">220%</span>
      </div>
    </div>
  )
}

export default function App() {
  return (
    <div className="flex h-[1029px] w-[1920px] flex-col overflow-hidden bg-[#e6e6e6]">
      <div className="relative bg-[#217346]">
        <Circuit />
        <TitleBar />
        <TabStrip />
      </div>
      <Ribbon />
      <FormulaBar />
      <div className="flex">
        <Sheet />
        <VScroll />
      </div>
      <SheetTabs />
      <StatusBar />
    </div>
  )
}
